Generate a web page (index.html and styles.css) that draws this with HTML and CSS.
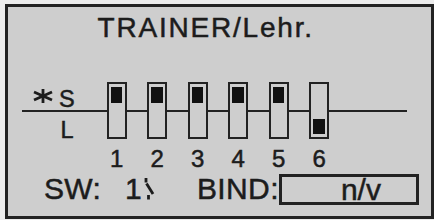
FILE: index.html
```html
<!DOCTYPE html>
<html>
<head>
<meta charset="utf-8">
<link rel="stylesheet" href="styles.css">
</head>
<body>
<div class="panel">
  <div class="title">TRAINER/Lehr.</div>
  <div class="sliders">
    <div class="labels">
      <div class="lab-s">
        <svg class="star" width="20" height="14" viewBox="0 0 20 14">
          <line x1="10" y1="0" x2="10" y2="14" />
          <line x1="1" y1="3" x2="19" y2="11" />
          <line x1="1" y1="11" x2="19" y2="3" />
        </svg>
        <span class="s">S</span>
      </div>
      <div class="lab-l">L</div>
    </div>
    <div class="ch"><div class="knob"></div></div>
    <div class="ch"><div class="knob"></div></div>
    <div class="ch"><div class="knob"></div></div>
    <div class="ch"><div class="knob"></div></div>
    <div class="ch"><div class="knob"></div></div>
    <div class="ch down"><div class="knob"></div></div>
  </div>
  <div class="nums">
    <span>1</span><span>2</span><span>3</span><span>4</span><span>5</span><span>6</span>
  </div>
  <div class="bottom">
    <span class="sw">SW:</span>
    <span class="one">1</span>
    <svg class="switch" width="12" height="24" viewBox="0 0 12 24">
      <line x1="2" y1="1" x2="2" y2="5.5" />
      <line x1="2.5" y1="6.5" x2="9" y2="17" />
      <line x1="4.5" y1="18" x2="4.5" y2="22.5" />
    </svg>
    <span class="bind">BIND:</span>
    <div class="val">n/v</div>
  </div>
</div>
</body>
</html>
```
FILE: styles.css
```css
html, body {
  margin: 0;
  padding: 0;
}
body {
  background: #ececec;
  width: 434px;
  height: 220px;
  overflow: hidden;
  font-family: "Liberation Sans", Arial, sans-serif;
  color: #1c1c1c;
  -webkit-text-stroke: 0.5px #1c1c1c;
}
.panel {
  box-sizing: border-box;
  margin: 4px 0 0 5px;
  width: 429px;
  height: 215px;
  border: 3px solid #222;
  background: #cecece;
  display: flex;
  flex-direction: column;
}
.title {
  margin-top: 7.3px;
  padding-left: 89.5px;
  font-size: 28px;
  line-height: 28px;
  height: 28px;
  letter-spacing: 1.8px;
  white-space: nowrap;
}
.sliders {
  margin-top: 39.7px;
  margin-left: 14px;
  width: 385px;
  height: 57px;
  padding-left: 11px;
  box-sizing: border-box;
  display: flex;
  align-items: flex-start;
  background: linear-gradient(#222, #222) 0 28px / 100% 2px no-repeat;
}
.labels {
  width: 42px;
  height: 57px;
  flex: none;
  font-size: 23.5px;
  line-height: 22px;
}
.lab-s {
  margin-top: 5.8px;
  height: 22px;
  display: flex;
  align-items: flex-start;
}
.star {
  margin-top: 1.2px;
  flex: none;
}
.star line, .switch line {
  stroke: #1c1c1c;
  stroke-width: 2.8;
}
.s {
  margin-left: 6px;
  letter-spacing: 0;
}
.lab-l {
  margin-top: 9px;
  padding-left: 27.4px;
}
.ch {
  box-sizing: border-box;
  flex: none;
  width: 20px;
  height: 57px;
  margin-left: 20.5px;
  border: 2px solid #222;
  background: #cecece;
  padding: 3.3px 2.3px 3px;
  display: flex;
  flex-direction: column;
  justify-content: flex-start;
}
.labels + .ch {
  margin-left: 31.7px;
}
.ch.down {
  justify-content: flex-end;
}
.knob {
  height: 15.4px;
  background: #111;
}
.nums {
  margin-top: 8.5px;
  padding-left: 98.7px;
  display: flex;
  gap: 20.5px;
  font-size: 24px;
  line-height: 23px;
  height: 23px;
}
.nums span {
  width: 20px;
  text-align: center;
}
.bottom {
  margin-top: 3.5px;
  height: 31px;
  padding-left: 36px;
  display: flex;
  align-items: center;
  font-size: 30px;
  line-height: 30px;
  white-space: nowrap;
}
.sw {
  letter-spacing: 0.3px;
}
.one {
  margin-left: 24px;
}
.switch {
  margin-left: 2.6px;
  flex: none;
}
.bind {
  margin-left: 40.6px;
  letter-spacing: 0.4px;
}
.val {
  box-sizing: border-box;
  margin-left: 0;
  width: 140px;
  height: 31px;
  border: 3px solid #222;
  padding-left: 24px;
  text-align: center;
  line-height: 25px;
  letter-spacing: 0;
}
```
